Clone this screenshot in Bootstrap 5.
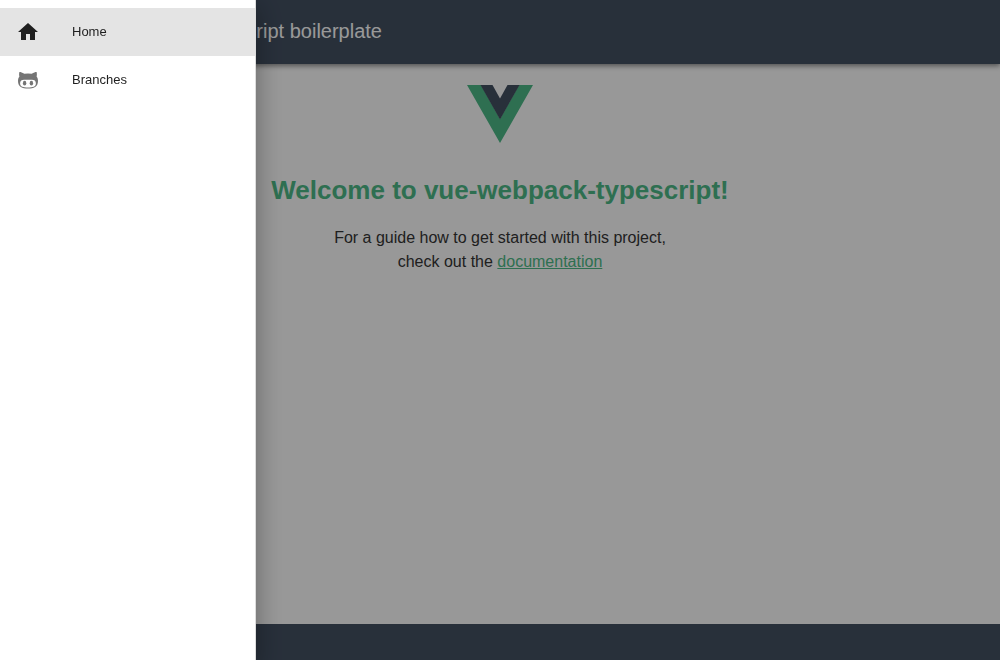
<!DOCTYPE html>
<html lang="en">
<head>
<meta charset="utf-8">
<meta name="viewport" content="width=device-width, initial-scale=1">
<title>vue-webpack-typescript boilerplate</title>
<link href="https://cdn.jsdelivr.net/npm/bootstrap@5.3.0/dist/css/bootstrap.min.css" rel="stylesheet">
<style>
  body { font-family: "Liberation Sans", Arial, sans-serif; background: #fdfdfd; color: #353535; }
  .topbar { height: 64px; padding: 0 24px 2px 193px; background: #435062; color: #fff; box-shadow: 0 2px 5px rgba(0,0,0,.45); }
  .topbar-title { font-size: 20px; line-height: 32px; }
  .welcome { padding-top: 21px; }
  .welcome h1 { margin: 31px 0 20px; font-size: 26px; line-height: 32px; font-weight: 700; color: #4dba87; }
  .welcome p { font-size: 16px; line-height: 24px; }
  .welcome a { color: #4dba87; }
  .page-footer { height: 36px; background: #435062; }
  .offcanvas-backdrop.show { opacity: .4; }
  .offcanvas.drawer { --bs-offcanvas-width: 256px; border-right: 1px solid #ddd; box-shadow: 0 8px 24px 2px rgba(0,0,0,.3); padding-top: 8px; color: #1f1f1f; visibility: visible; }
  .drawer .nav-link { height: 48px; padding: 0 16px; gap: 32px; font-size: 13px; line-height: 20px; color: #1f1f1f; }
  .drawer .nav-link.active { background: #e4e4e4; }
</style>
</head>
<body class="d-flex flex-column min-vh-100">
  <header class="topbar d-flex align-items-center">
    <span class="topbar-title text-nowrap">Typescript boilerplate</span>
  </header>
  <main class="welcome flex-grow-1 text-center">
    <svg class="d-block mx-auto" width="66" height="58" viewBox="0 0 66 58" role="img" aria-label="Vue logo">
      <path fill="#4dba87" d="M0 0h14l19 34L52 0h14L33 58z"/>
      <path fill="#435062" d="M13.500 0H25.500L33 13.500 40.500 0H52.500L33 34.500z"/>
    </svg>
    <h1>Welcome to vue-webpack-typescript!</h1>
    <p class="mb-0">For a guide how to get started with this project,<br>check out the <a href="#documentation">documentation</a></p>
  </main>
  <footer class="page-footer"></footer>

  <nav class="offcanvas offcanvas-start show drawer" data-bs-backdrop="false" data-bs-scroll="true" tabindex="-1" aria-label="Main navigation">
    <div class="nav flex-column">
      <a class="nav-link active d-flex align-items-center" href="#home">
        <svg width="24" height="24" viewBox="0 0 24 24" fill="#1f1f1f" aria-hidden="true"><path d="M10 20v-6h4v6h5v-8h3L12 3 2 12h3v8z"/></svg>
        Home
      </a>
      <a class="nav-link d-flex align-items-center" href="#branches">
        <svg width="24" height="24" viewBox="0 0 24 24" fill="#757575" aria-hidden="true">
          <path fill-rule="evenodd" d="M20.600 8.400c.4-1 .4-2.600 0-4.300-1-.1-2.700.4-4.900 1.700a20 20 0 0 0-7.400 0C6.100 4.500 4.400 4 3.400 4.100c-.4 1.700-.4 3.300 0 4.300C2.400 9.600 2 11 2 13c0 6 4.300 7.600 10 7.600S22 19 22 13c0-2-.4-3.400-1.400-4.600zM12 19.500c-4.700 0-7.900-.8-7.900-4.300 0-2.900 2.100-3.800 4.900-3.500 2 .2 4 .2 6 0 2.800-.3 4.900.6 4.900 3.500 0 3.500-3.200 4.300-7.900 4.300z"/>
          <ellipse cx="8.600" cy="15.200" rx="1.700" ry="2.400"/><ellipse cx="15.400" cy="15.200" rx="1.700" ry="2.400"/>
        </svg>
        Branches
      </a>
    </div>
  </nav>
  <div class="offcanvas-backdrop fade show"></div>
  <script src="https://cdn.jsdelivr.net/npm/bootstrap@5.3.0/dist/js/bootstrap.bundle.min.js"></script>
</body>
</html>
